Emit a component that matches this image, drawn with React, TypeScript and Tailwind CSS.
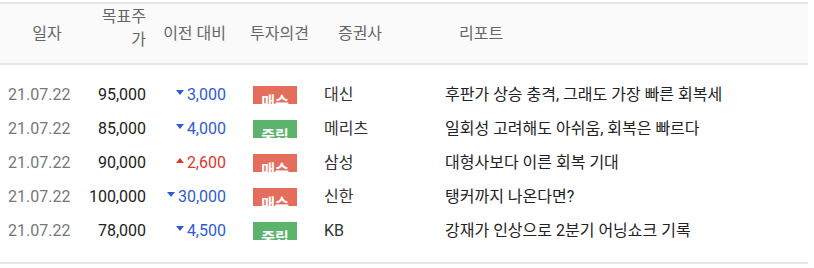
import React from "react";

interface Report {
    date: string;
    target: string;
    change: string;
    up: boolean;
    opinion: "매수" | "중립";
    broker: string;
    title: string;
}

const reports: Report[] = [
    { date: "21.07.22", target: "95,000", change: "3,000", up: false, opinion: "매수", broker: "대신", title: "후판가 상승 충격, 그래도 가장 빠른 회복세" },
    { date: "21.07.22", target: "85,000", change: "4,000", up: false, opinion: "중립", broker: "메리츠", title: "일회성 고려해도 아쉬움, 회복은 빠르다" },
    { date: "21.07.22", target: "90,000", change: "2,600", up: true, opinion: "매수", broker: "삼성", title: "대형사보다 이른 회복 기대" },
    { date: "21.07.22", target: "100,000", change: "30,000", up: false, opinion: "매수", broker: "신한", title: "탱커까지 나온다면?" },
    { date: "21.07.22", target: "78,000", change: "4,500", up: false, opinion: "중립", broker: "KB", title: "강재가 인상으로 2분기 어닝쇼크 기록" },
];

const cols = "grid grid-cols-[94px_60px_80px_86px_80px_1fr]";

function Triangle({ up }: { up: boolean }) {
    return (
        <svg width="8" height="5" viewBox="0 0 8 5" className="mr-[3px] mt-[7px] shrink-0 self-start">
            {up ? (
                <polygon points="0,5 8,5 4,0" fill="#e2362b" />
            ) : (
                <polygon points="0,0 8,0 4,5" fill="#2f5bd4" />
            )}
        </svg>
    );
}

export default function App() {
    return (
        <div
            className="w-[808px] bg-white pt-[2px] text-[16px]"
            style={{ fontFamily: "Roboto, 'Noto Sans CJK KR', sans-serif" }}
        >
            <div className={`${cols} h-[63px] items-center border-y-2 border-[#e5e5ea] bg-[#fafafa] text-[#666]`}>
                <div className="text-center">일자</div>
                <div className="pb-[11px] pr-2 text-right leading-[23px]">목표주가</div>
                <div className="pr-2 text-right">이전 대비</div>
                <div className="pl-4">투자의견</div>
                <div className="text-center">증권사</div>
                <div className="pl-[59px]">리포트</div>
            </div>

            <div className="border-b-2 border-[#e5e5ea] pb-[14px] pt-[13px]">
                {reports.map((r, i) => (
                    <div key={i} className={`${cols} h-[34px] items-center`}>
                        <div className="pl-2 text-[#777]">{r.date}</div>
                        <div className="flex justify-end whitespace-nowrap pr-2 text-[#222]">
                            <span className="shrink-0">{r.target}</span>
                        </div>
                        <div className="flex items-center justify-end whitespace-nowrap pr-2">
                            <Triangle up={r.up} />
                            <span className={`shrink-0 ${r.up ? "text-[#e2362b]" : "text-[#2f5bd4]"}`}>
                                {r.change}
                            </span>
                        </div>
                        <div className="pl-[19px]">
                            <div
                                className={`h-[18px] w-[44px] overflow-hidden text-center text-[15px] font-bold leading-[20px] text-white ${
                                    r.opinion === "매수" ? "bg-[#e56d5c]" : "bg-[#5cb46c]"
                                }`}
                            >
                                <div className="pt-[6px]">{r.opinion}</div>
                            </div>
                        </div>
                        <div className="pl-1 text-[#333]">{r.broker}</div>
                        <div className="pl-[45px] text-[#222]">{r.title}</div>
                    </div>
                ))}
            </div>
        </div>
    );
}
